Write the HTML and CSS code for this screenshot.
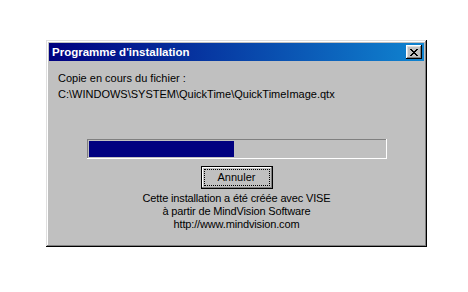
FILE: index.html
```html
<!DOCTYPE html>
<html lang="fr">
<head>
  <meta charset="UTF-8" />
  <title>Programme d'installation</title>
  <link rel="stylesheet" href="styles.css">
</head>
<body>
  <div class="window">
    <div class="titlebar">
      <span class="title">Programme d'installation</span>
      <button class="close" aria-label="Fermer">
        <svg width="8" height="7" viewBox="0 0 8 7">
          <path d="M0 0h2v1h1v1h2v-1h1v-1h2v1h-1v1h-1v1h-1v1h1v1h1v1h1v1h-2v-1h-1v-1h-2v1h-1v1h-2v-1h1v-1h1v-1h1v-1h-1v-1h-1v-1h-1z" fill="#000"/>
        </svg>
      </button>
    </div>
    <div class="content">
      <p class="status">Copie en cours du fichier :</p>
      <p class="path">C:\WINDOWS\SYSTEM\QuickTime\QuickTimeImage.qtx</p>
      <div class="progress">
        <div class="fill" style="width: 49%"></div>
      </div>
      <button class="cancel"><span>Annuler</span></button>
      <div class="credits">
        <p>Cette installation a été créée avec VISE</p>
        <p>à partir de MindVision Software</p>
        <p>http://www.mindvision.com</p>
      </div>
    </div>
  </div>
</body>
</html>
```

FILE: styles.css
```css
body {
  margin: 0;
  background: #fff;
  font-family: "Liberation Sans", Arial, sans-serif;
  font-size: 11px;
  color: #000;
}
p {
  margin: 0;
}
.window {
  box-sizing: border-box;
  width: 381px;
  height: 207px;
  margin: 40px 0 0 46px;
  padding: 3px;
  background: #c0c0c0;
  box-shadow: inset -1px -1px #000, inset 1px 1px #dfdfdf, inset -2px -2px #808080, inset 2px 2px #fff;
  display: flex;
  flex-direction: column;
}
.titlebar {
  height: 18px;
  display: flex;
  align-items: center;
  justify-content: space-between;
  padding: 0 2px 0 3px;
  background: linear-gradient(to right, #000080, #1084d0);
}
.title {
  color: #fff;
  font-weight: bold;
  font-size: 11.5px;
}
.close {
  box-sizing: border-box;
  width: 16px;
  height: 14px;
  padding: 0;
  border: none;
  background: #c0c0c0;
  box-shadow: inset -1px -1px #000, inset 1px 1px #fff, inset -2px -2px #808080, inset 2px 2px #dfdfdf;
  display: flex;
  align-items: center;
  justify-content: center;
}
.close svg {
  display: block;
  margin: 0 1px 0 0;
}
.content {
  flex: 1;
  display: flex;
  flex-direction: column;
  padding: 11px 9px 0;
}
.status {
  line-height: 13px;
}
.path {
  line-height: 13px;
  margin-top: 3px;
}
.progress {
  box-sizing: border-box;
  width: 300px;
  height: 20px;
  margin: 38px auto 0;
  padding: 2px;
  background: #c0c0c0;
  box-shadow: inset -1px -1px #fff, inset 1px 1px #808080;
}
.fill {
  height: 100%;
  background: #000080;
}
.cancel {
  box-sizing: border-box;
  width: 72px;
  height: 23px;
  margin: 7px auto 0;
  padding: 3px;
  border: none;
  background: #c0c0c0;
  font: inherit;
  color: #000;
  box-shadow: inset -1px -1px #000, inset 1px 1px #000, inset -2px -2px #808080, inset 2px 2px #fff, inset -3px -3px #c0c0c0;
}
.cancel span {
  display: block;
  height: 100%;
  line-height: 15px;
  border: 1px dotted #000;
  box-sizing: border-box;
}
.credits {
  margin-top: 3px;
  text-align: center;
  line-height: 13px;
  letter-spacing: -0.15px;
}
```
